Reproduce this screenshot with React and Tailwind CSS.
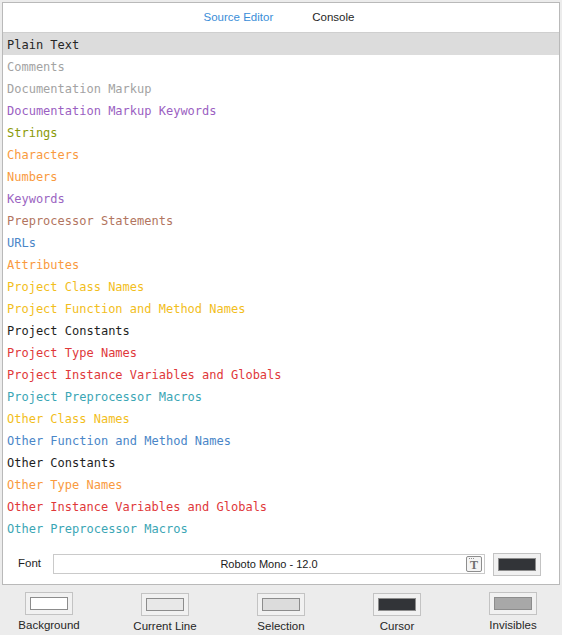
import React from 'react';

const rows = [
  { label: 'Plain Text', color: 'text-[#262626]' },
  { label: 'Comments', color: 'text-[#a3a3a3]' },
  { label: 'Documentation Markup', color: 'text-[#a3a3a3]' },
  { label: 'Documentation Markup Keywords', color: 'text-[#9b5fc2]' },
  { label: 'Strings', color: 'text-[#8a9a0a]' },
  { label: 'Characters', color: 'text-[#f99a3e]' },
  { label: 'Numbers', color: 'text-[#f99a3e]' },
  { label: 'Keywords', color: 'text-[#9b65c2]' },
  { label: 'Preprocessor Statements', color: 'text-[#b27560]' },
  { label: 'URLs', color: 'text-[#4a86c8]' },
  { label: 'Attributes', color: 'text-[#f99a3e]' },
  { label: 'Project Class Names', color: 'text-[#f2be1c]' },
  { label: 'Project Function and Method Names', color: 'text-[#f2be1c]' },
  { label: 'Project Constants', color: 'text-[#1e1e1e]' },
  { label: 'Project Type Names', color: 'text-[#e0383a]' },
  { label: 'Project Instance Variables and Globals', color: 'text-[#e0383a]' },
  { label: 'Project Preprocessor Macros', color: 'text-[#3ba6b5]' },
  { label: 'Other Class Names', color: 'text-[#f2be1c]' },
  { label: 'Other Function and Method Names', color: 'text-[#4a86c8]' },
  { label: 'Other Constants', color: 'text-[#1e1e1e]' },
  { label: 'Other Type Names', color: 'text-[#f99a3e]' },
  { label: 'Other Instance Variables and Globals', color: 'text-[#e0383a]' },
  { label: 'Other Preprocessor Macros', color: 'text-[#3ba6b5]' },
];

const wells = [
  { label: 'Background', swatch: 'bg-white', shift: 'mt-0' },
  { label: 'Current Line', swatch: 'bg-[#e8e8e8]', shift: 'mt-[1px]' },
  { label: 'Selection', swatch: 'bg-[#dcdcdc]', shift: 'mt-[1px]' },
  { label: 'Cursor', swatch: 'bg-[#323438]', shift: 'mt-[1px]' },
  { label: 'Invisibles', swatch: 'bg-[#a8a8a8]', shift: 'mt-0' },
];

const ColorWell = ({ swatch }) => (
  <div className="w-[48px] h-[23px] border border-[#c3c3c3] bg-[#f1f1f1] flex items-center justify-center">
    <div className={`w-[38px] h-[13px] border border-[#8c8c8c] ${swatch}`}></div>
  </div>
);

export default function App() {
  return (
    <div
      className="w-[562px] h-[635px] bg-[#ececec] pt-[2px] pl-[2px] overflow-hidden"
      style={{ fontFamily: '"Liberation Sans", Arial, sans-serif' }}
    >
      {/* Main panel */}
      <div className="w-[558px] h-[583px] bg-white border border-[#b9b9b9] flex flex-col">
        {/* Tabs */}
        <div className="h-[30px] border-b border-[#cfcfcf] flex items-center justify-center gap-[39px] pr-[4px] text-[11.5px]">
          <span className="text-[#3a8ed8]">Source Editor</span>
          <span className="text-[#1f1f1f]">Console</span>
        </div>

        {/* Syntax rows */}
        <div style={{ fontFamily: '"DejaVu Sans Mono", "Liberation Mono", monospace' }}>
          {rows.map((row, i) => (
            <div
              key={row.label}
              className={`h-[22px] flex items-center pl-[4px] pt-[2px] text-[12px] ${row.color} ${i === 0 ? 'bg-[#dcdcdc]' : ''}`}
            >
              {row.label}
            </div>
          ))}
        </div>

        {/* Font row */}
        <div className="mt-[13px] h-[24px] flex items-center pl-[15px] pr-[18px]">
          <span className="text-[11.5px] text-[#1f1f1f] w-[23px]">Font</span>
          <div className="ml-[12px] flex-1 h-[20px] border border-[#cacaca] bg-white relative flex items-center justify-center">
            <span className="text-[11px] text-[#1a1a1a]">Roboto Mono - 12.0</span>
            <div className="absolute right-[2px] top-[1px] w-[16px] h-[16px] border border-[#8e8e8e] rounded-[2px] bg-[#f4f4f4] flex flex-col items-center">
              <div className="w-full h-[3px] flex items-center gap-[1px] pl-[2px]">
                <span className="w-[1px] h-[1px] bg-[#8e8e8e]"></span>
                <span className="w-[1px] h-[1px] bg-[#8e8e8e]"></span>
                <span className="w-[1px] h-[1px] bg-[#8e8e8e]"></span>
              </div>
              <span
                className="text-[12px] leading-[11px] font-bold text-[#6e6e6e]"
                style={{ fontFamily: '"Liberation Serif", "Times New Roman", serif' }}
              >
                T
              </span>
            </div>
          </div>
          <div className="ml-[8px]">
            <ColorWell swatch="bg-[#323438]" />
          </div>
        </div>
      </div>

      {/* Bottom colour wells */}
      <div className="flex gap-[18px] -ml-[2px] pt-[7px]">
        {wells.map((w) => (
          <div key={w.label} className={`w-[98px] flex flex-col items-center ${w.shift}`}>
            <ColorWell swatch={w.swatch} />
            <span className="mt-[3px] text-[11.5px] leading-[14px] text-[#262626]">{w.label}</span>
          </div>
        ))}
      </div>
    </div>
  );
}
